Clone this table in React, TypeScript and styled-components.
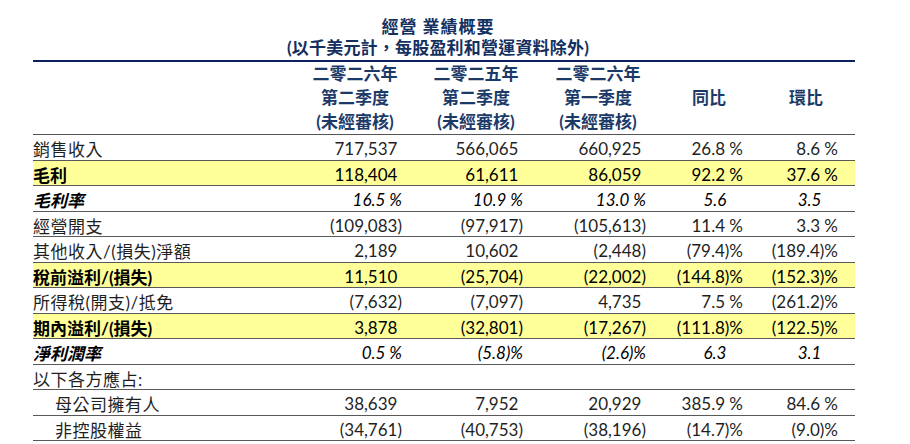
import styled, { createGlobalStyle } from "styled-components";

const GlobalStyle = createGlobalStyle`
  body {
    margin: 0;
    background: #ffffff;
    font-family: "Lato", "Noto Sans CJK TC", sans-serif;
    color: #1a1a1a;
  }
`;

const COLUMNS = "248px 121px 121px 123px 97px 95px";

const Page = styled.div`
  width: 822px;
  padding: 16px 0 0 33px;
`;

const Title = styled.div`
  padding-right: 12px;
  text-align: center;
  color: #13305f;
  font-weight: 700;
  font-size: 17px;
  line-height: 21px;
  margin-bottom: 2px;
`;

const Heading = styled.div`
  letter-spacing: 1px;
`;

const Subtitle = styled.div`
  letter-spacing: 0.2px;
`;

const Header = styled.div`
  display: grid;
  grid-template-columns: ${COLUMNS};
  border-top: 2.5px solid #0c2260;
  border-bottom: 1.5px solid #555555;
  color: #1c3a68;
  font-weight: 700;
  font-size: 17px;
`;

const HeaderCell = styled.div<{ $lead: number }>`
  padding-left: ${(p) => p.$lead}px;
  display: flex;
  flex-direction: column;
  justify-content: center;
  align-items: center;
  line-height: 24px;
  white-space: nowrap;
`;

const Row = styled.div<{ $tone: "plain" | "highlight" | "ratio" }>`
  display: grid;
  grid-template-columns: ${COLUMNS};
  align-items: center;
  box-sizing: border-box;
  height: 25.5px;
  padding-top: 1px;
  border-bottom: 1px solid #595959;
  background: ${(p) => (p.$tone === "highlight" ? "#ffff99" : "transparent")};
  font-size: 17px;
  font-style: ${(p) => (p.$tone === "ratio" ? "italic" : "normal")};
  color: ${(p) => (p.$tone === "plain" ? "#1f1f1f" : "#000000")};
  white-space: nowrap;
`;

const Label = styled.div<{ $indent: boolean; $bold: boolean }>`
  padding-left: ${(p) => (p.$indent ? 22 : 0)}px;
  font-weight: ${(p) => (p.$bold ? 700 : 400)};
  letter-spacing: ${(p) => (p.$bold ? 0 : 0.5)}px;
`;

const Value = styled.div`
  text-align: right;
`;

const Ghost = styled.span`
  visibility: hidden;
`;

type Tone = "plain" | "highlight" | "ratio";

type Line = {
  label: string;
  tone: Tone;
  indent?: boolean;
  values: string[];
};

const heads = [
  { lead: 27, lines: ["二零二六年", "第二季度", "(未經審核)"] },
  { lead: 27, lines: ["二零二五年", "第二季度", "(未經審核)"] },
  { lead: 27, lines: ["二零二六年", "第一季度", "(未經審核)"] },
  { lead: 29, lines: ["同比"] },
  { lead: 31, lines: ["環比"] },
];

const lines: Line[] = [
  { label: "銷售收入", tone: "plain", values: ["717,537", "566,065", "660,925", "26.8 %", "8.6 %"] },
  { label: "毛利", tone: "highlight", values: ["118,404", "61,611", "86,059", "92.2 %", "37.6 %"] },
  { label: "毛利率", tone: "ratio", values: ["16.5 %", "10.9 %", "13.0 %", "5.6", "3.5"] },
  { label: "經營開支", tone: "plain", values: ["(109,083)", "(97,917)", "(105,613)", "11.4 %", "3.3 %"] },
  { label: "其他收入/(損失)淨額", tone: "plain", values: ["2,189", "10,602", "(2,448)", "(79.4)%", "(189.4)%"] },
  { label: "稅前溢利/(損失)", tone: "highlight", values: ["11,510", "(25,704)", "(22,002)", "(144.8)%", "(152.3)%"] },
  { label: "所得稅(開支)/抵免", tone: "plain", values: ["(7,632)", "(7,097)", "4,735", "7.5 %", "(261.2)%"] },
  { label: "期內溢利/(損失)", tone: "highlight", values: ["3,878", "(32,801)", "(17,267)", "(111.8)%", "(122.5)%"] },
  { label: "淨利潤率", tone: "ratio", values: ["0.5 %", "(5.8)%", "(2.6)%", "6.3", "3.1"] },
  { label: "以下各方應占:", tone: "plain", values: ["", "", "", "", ""] },
  { label: "母公司擁有人", tone: "plain", indent: true, values: ["38,639", "7,952", "20,929", "385.9 %", "84.6 %"] },
  { label: "非控股權益", tone: "plain", indent: true, values: ["(34,761)", "(40,753)", "(38,196)", "(14.7)%", "(9.0)%"] },
];

// keeps digits lined up: positive amounts leave room for ")", ratio points for " %"
const ghostFor = (value: string, col: number, tone: Tone) => {
  if (!value) return "";
  if (tone === "ratio") return col >= 3 ? " %" : "";
  if (col < 3 && !value.endsWith(")")) return ")";
  return "";
};

const App = () => {
  return (
    <Page>
      <GlobalStyle />
      <Title>
        <Heading>經營 業績概要</Heading>
        <Subtitle>(以千美元計，每股盈利和營運資料除外)</Subtitle>
      </Title>
      <Header>
        <div />
        {heads.map((h, i) => (
          <HeaderCell key={i} $lead={h.lead}>
            {h.lines.map((t) => (
              <span key={t}>{t}</span>
            ))}
          </HeaderCell>
        ))}
      </Header>
      {lines.map((line) => (
        <Row key={line.label} $tone={line.tone}>
          <Label $indent={!!line.indent} $bold={line.tone !== "plain"}>
            {line.label}
          </Label>
          {line.values.map((v, col) => (
            <Value key={col}>
              {v}
              <Ghost>{ghostFor(v, col, line.tone)}</Ghost>
            </Value>
          ))}
        </Row>
      ))}
    </Page>
  );
};

export default App;
